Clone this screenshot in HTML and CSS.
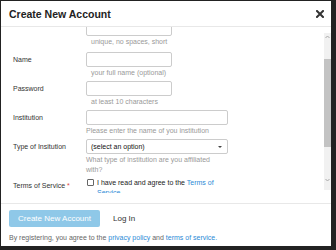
FILE: index.html
```html
<!DOCTYPE html>
<html lang="en">
<head>
    <meta charset="UTF-8">
    <meta name="viewport" content="width=device-width, initial-scale=1.0">
    <title>Create New Account</title>
    <link rel="stylesheet" href="styles.css">
</head>
<body>
    <div class="modal">
        <div class="modal-header">
            <h1 class="modal-title">Create New Account</h1>
            <button class="close" aria-label="Close">
                <svg width="8" height="8" viewBox="0 0 8 8"><path d="M1 1L7 7M7 1L1 7" stroke="#333" stroke-width="2" stroke-linecap="square"/></svg>
            </button>
        </div>
        <div class="modal-body">
            <div class="form-scroll">
                <div class="form">
                    <div class="form-row first-row">
                        <div class="form-label"></div>
                        <div class="form-control">
                            <input type="text" class="text-input short">
                            <div class="hint indent">unique, no spaces, short</div>
                        </div>
                    </div>
                    <div class="form-row">
                        <label class="form-label">Name</label>
                        <div class="form-control">
                            <input type="text" class="text-input short">
                            <div class="hint indent">your full name (optional)</div>
                        </div>
                    </div>
                    <div class="form-row">
                        <label class="form-label">Password</label>
                        <div class="form-control">
                            <input type="password" class="text-input short">
                            <div class="hint indent">at least 10 characters</div>
                        </div>
                    </div>
                    <div class="form-row">
                        <label class="form-label">Institution</label>
                        <div class="form-control">
                            <input type="text" class="text-input">
                            <div class="hint">Please enter the name of you institution</div>
                        </div>
                    </div>
                    <div class="form-row">
                        <label class="form-label">Type of Insitution</label>
                        <div class="form-control">
                            <div class="select">(select an option)</div>
                            <div class="hint">What type of institution are you affiliated with?</div>
                        </div>
                    </div>
                    <div class="form-row terms-row">
                        <label class="form-label">Terms of Service <span class="required">*</span></label>
                        <div class="form-control checkbox-line">
                            <input type="checkbox" class="checkbox">
                            <span>I have read and agree to the <a href="#">Terms of Service</a></span>
                        </div>
                    </div>
                </div>
            </div>
            <div class="scrollbar">
                <svg class="arrow" width="7" height="8" viewBox="0 0 7 8"><path d="M1.5 5L3.5 3L5.5 5" fill="none" stroke="#a8a8a8" stroke-width="1"/></svg>
                <div class="track"><div class="thumb"></div></div>
                <svg class="arrow" width="7" height="8" viewBox="0 0 7 8"><path d="M1.5 3L3.5 5L5.5 3" fill="none" stroke="#a8a8a8" stroke-width="1"/></svg>
            </div>
        </div>
        <div class="modal-footer">
            <div class="footer-actions">
                <button class="btn-primary">Create New Account</button>
                <a href="#" class="btn-link">Log In</a>
            </div>
            <p class="footer-note">By registering, you agree to the <a href="#">privacy policy</a> and <a href="#">terms of service.</a></p>
        </div>
    </div>
</body>
</html>
```

FILE: styles.css
```css
body {
    font-family: "Liberation Sans", Arial, sans-serif;
    margin: 0;
    padding: 1px;
    background-color: #222;
    color: #333;
}
.modal {
    width: 330px;
    height: 245px;
    background-color: #fff;
    display: flex;
    flex-direction: column;
}
.modal-header {
    height: 25px;
    border-bottom: 1px solid #e8e8e8;
    display: flex;
    align-items: center;
    justify-content: space-between;
    padding: 0 7px 0 8px;
}
.modal-title {
    margin: 0;
    font-size: 10.5px;
    font-weight: bold;
    color: #222;
}
.close {
    border: none;
    background: none;
    padding: 0;
    width: 8px;
    height: 8px;
    display: flex;
}
.modal-body {
    height: 166px;
    margin-bottom: 10px;
    display: flex;
}
.form-scroll {
    flex: 1;
    overflow: hidden;
    padding-left: 12px;
}
.form {
    margin-top: -6px;
}
.form-row {
    display: flex;
    margin-bottom: 3px;
}
.first-row {
    margin-bottom: 5px;
}
.form-label {
    width: 73px;
    font-size: 7px;
    line-height: 15px;
    color: #333;
}
.required {
    color: #e0443c;
}
.form-control {
    width: 142px;
}
.text-input {
    display: block;
    width: 142px;
    height: 15px;
    margin: 0;
    padding: 0 4px;
    box-sizing: border-box;
    border: 1px solid #ccc;
    border-radius: 2px;
}
.text-input.short {
    width: 86px;
}
.hint {
    font-size: 7px;
    line-height: 10px;
    margin-top: 1px;
    color: #999;
}
.hint.indent {
    padding-left: 5px;
}
.select {
    position: relative;
    height: 15px;
    box-sizing: border-box;
    border: 1px solid #ccc;
    border-radius: 2px;
    padding-left: 4px;
    font-size: 7px;
    line-height: 13px;
    color: #111;
}
.select::after {
    content: '';
    position: absolute;
    right: 5px;
    top: 6px;
    border-left: 2px solid transparent;
    border-right: 2px solid transparent;
    border-top: 2px solid #444;
}
.terms-row {
    margin-top: 3px;
}
.checkbox-line {
    display: flex;
    align-items: flex-start;
    font-size: 7px;
    line-height: 10px;
    color: #222;
}
.checkbox {
    appearance: none;
    width: 7px;
    height: 7px;
    margin: 1px 3px 0 1px;
    border: 1px solid #666;
    border-radius: 1px;
    flex-shrink: 0;
}
a {
    color: #2b8ad6;
    text-decoration: none;
}
.scrollbar {
    width: 7px;
    height: 157px;
    margin-top: 6px;
    padding-bottom: 6px;
    box-sizing: border-box;
    background-color: #f1f1f1;
    display: flex;
    flex-direction: column;
}
.arrow {
    display: block;
    flex-shrink: 0;
}
.track {
    flex: 1;
}
.thumb {
    margin-top: 18px;
    height: 88px;
    background-color: #c3c3c3;
}
.modal-footer {
    border-top: 1px solid #e8e8e8;
    padding: 6px 8px 3px;
}
.footer-actions {
    display: flex;
    align-items: center;
}
.btn-primary {
    width: 91px;
    height: 17px;
    padding: 0;
    border: none;
    border-radius: 2px;
    background-color: #8fc8e8;
    color: #fff;
    font-family: inherit;
    font-size: 8px;
}
.btn-link {
    margin-left: 13px;
    font-size: 8px;
    color: #333;
}
.footer-note {
    margin: 6px 0 0;
    font-size: 7px;
    line-height: 10px;
    color: #666;
}
```
